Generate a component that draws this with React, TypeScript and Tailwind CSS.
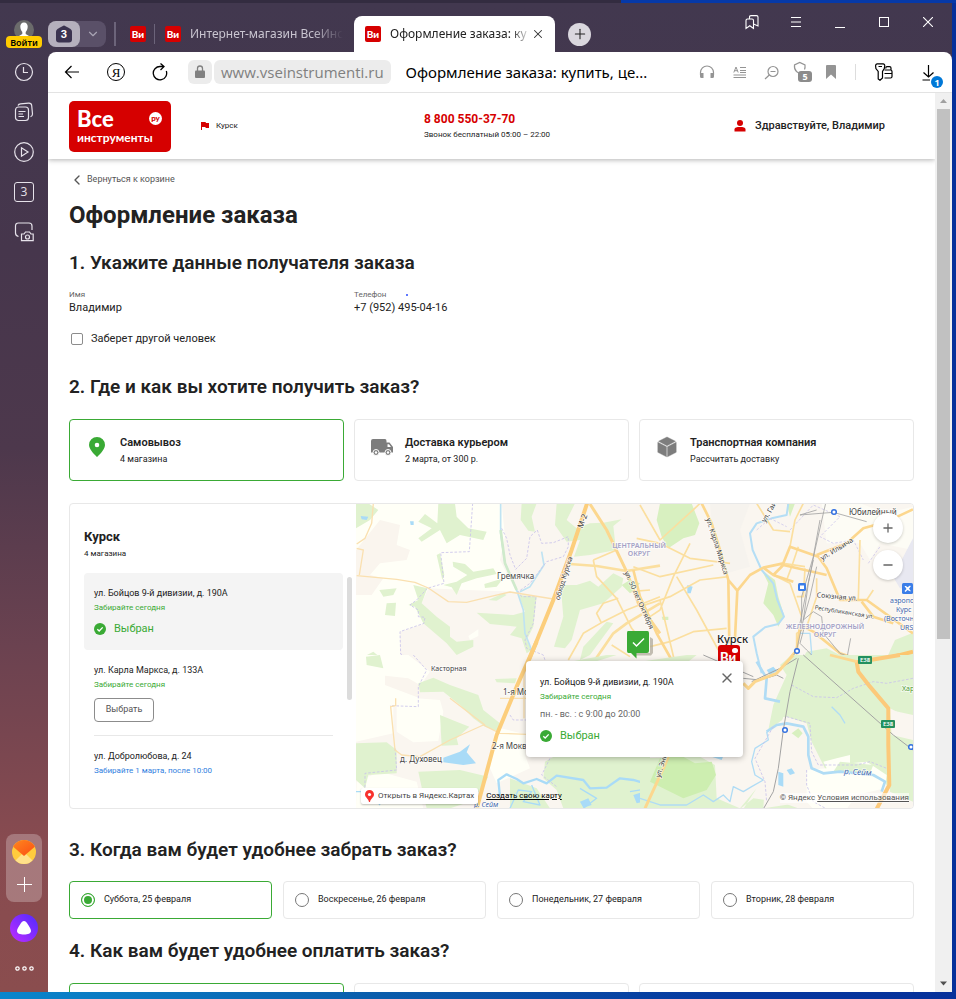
import { useState } from "react";
import type { ReactNode } from "react";
import { ChevronDown, ChevronLeft, Minus, Plus, X } from "lucide-react";

const UI = "font-['Noto_Sans','Open_Sans',sans-serif]";
const TAB = "font-['Open_Sans','Noto_Sans',sans-serif]";

function Favicon() {
  return (
    <span className="flex size-4 shrink-0 items-center justify-center rounded-[2px] bg-[#d60000] font-['Lato',sans-serif] text-[10px] leading-none font-black text-white">
      Ви
    </span>
  );
}

function TabBar() {
  return (
    <div className="flex h-[49px] justify-between">
      <div className="mt-[13px] flex h-9 min-w-0 items-center">
        <div className="flex h-[26px] w-[58px] shrink-0 items-center rounded-lg bg-[#5a5068]">
          <button className="flex h-[26px] w-8 items-center justify-center rounded-lg bg-[#b5b0bd]" aria-label="Вкладки">
            <span className="relative flex h-[18px] w-4 items-center justify-center text-[11px] leading-none font-bold text-white">
              <svg className="absolute inset-0" width="16" height="18" viewBox="0 0 16 18"><path d="M8 .5Q8.800 .5 14.500 4Q16 5 16 6.500V14.500Q16 17.500 13 17.500H3Q0 17.500 0 14.500V6.500Q0 5 1.500 4Q7.200 .5 8 .5Z" fill="#3b3350" /></svg>
              <span className="relative">3</span>
            </span>
          </button>
          <button className="flex h-[26px] w-[26px] items-center justify-center text-[#a9a4b4]" aria-label="Список вкладок">
            <ChevronDown size={14} strokeWidth={2} />
          </button>
        </div>
        <span className="ml-2 h-6 w-[2px] shrink-0 bg-[#6c647a]" />
        <button className="ml-[14px] shrink-0" aria-label="Закреплённая вкладка"><Favicon /></button>
        <span className="ml-2 h-5 w-px shrink-0 bg-[#6c647a]" />
        <button className="ml-[10px] flex w-[181px] shrink-0 items-center overflow-hidden text-left text-[#c9c5d0]">
          <Favicon />
          <span className={`ml-[9px] overflow-hidden text-[12px] leading-5 whitespace-nowrap [mask-image:linear-gradient(90deg,#000_80%,transparent)] ${UI}`}>Интернет-магазин ВсеИнс</span>
        </button>
        <div className="ml-2 flex h-9 w-[201px] shrink-0 items-center rounded-t-lg bg-white px-[11px]">
          <Favicon />
          <span className={`ml-[9px] min-w-0 flex-1 overflow-hidden text-[12px] leading-5 whitespace-nowrap text-[#222] [mask-image:linear-gradient(90deg,#000_86%,transparent)] ${UI}`}>Оформление заказа: ку</span>
          <button className="-mr-px text-[#333]" aria-label="Закрыть вкладку"><X size={14} strokeWidth={1.8} /></button>
        </div>
        <button className="ml-[13px] flex size-[23px] shrink-0 items-center justify-center rounded-full bg-[#dad7de] text-[#222]" aria-label="Новая вкладка">
          <Plus size={16} strokeWidth={1.6} />
        </button>
      </div>
      <div className="flex h-[38px] shrink-0 items-center pr-[2px] text-white">
        <button className="flex w-11 justify-center" aria-label="Закладки">
          <svg width="14" height="15" viewBox="0 0 14 15" fill="none" stroke="currentColor" strokeWidth="1.1">
            <path d="M1 5.500C1 4.500 1.500 4 2.500 4H7C8 4 8.500 4.500 8.500 5.500V13.500L4.800 10.800L1 13.500Z" />
            <path d="M4.500 4V2C4.500 1 5 .6 6 .6H11.500C12.500 .6 13 1 13 2V11L8.500 9" />
          </svg>
        </button>
        <button className="flex w-11 justify-center" aria-label="Меню">
          <svg width="10" height="10" viewBox="0 0 10 10" stroke="currentColor"><path d="M0 .5H10M0 5H10M0 9.500H10" /></svg>
        </button>
        <button className="flex h-3 w-11 items-end justify-center" aria-label="Свернуть"><span className="h-px w-[10px] bg-white" /></button>
        <button className="flex w-11 justify-center" aria-label="Развернуть"><span className="size-[10px] border border-white" /></button>
        <button className="flex w-11 justify-center" aria-label="Закрыть">
          <svg width="10" height="10" viewBox="0 0 10 10" stroke="currentColor" strokeWidth="1.100"><path d="M0 0L10 10M10 0L0 10" /></svg>
        </button>
      </div>
    </div>
  );
}

function SideButton({ label, children }: { label: string; children: ReactNode }) {
  return (
    <button aria-label={label} className="flex h-10 w-12 items-center justify-center text-[#e6e2ea]">
      {children}
    </button>
  );
}

const line = { fill: "none", stroke: "currentColor", strokeWidth: 1.2 } as const;

function Sidebar() {
  return (
    <aside className="flex w-12 shrink-0 flex-col items-center pt-[17px] pb-[14px]">
      <button className="relative flex h-7 w-9 justify-center">
        <svg width="20" height="20" viewBox="0 0 20 20">
          <circle cx="10" cy="10" r="10" fill="#6b6b6b" />
          <path d="M10 2.500C7.500 2.500 6.300 4.300 6.300 6.600C6.300 9 7.300 11 8.300 12V14L5 16V20H15V16L11.700 14V12C12.700 11 13.700 9 13.700 6.600C13.700 4.300 12.500 2.500 10 2.500Z" fill="#fff" />
        </svg>
        <span className={`absolute bottom-0 left-0 flex h-3 w-9 items-center justify-center rounded-[4px] bg-[#fc0] text-[9px] leading-none font-semibold text-black ${UI}`}>Войти</span>
      </button>
      <nav className="mt-1 flex flex-col">
        <SideButton label="История">
          <svg width="20" height="20" viewBox="0 0 20 20" {...line}><circle cx="10" cy="10" r="8.500" /><path d="M9.500 5V10.500H14" /></svg>
        </SideButton>
        <SideButton label="Коллекции">
          <svg width="20" height="20" viewBox="0 0 20 20" {...line}>
            <rect x="1.500" y="5" width="13" height="13.500" rx="3" />
            <path d="M4 3.500C4.500 2.300 5.500 2 6.500 1.900L14.500 1.200C16.500 1 17.500 2 17.700 3.500L18.500 12C18.500 13.500 18 14.300 16.500 14.800M4.500 9.500H11.500M4.500 12H9M4.500 14.500H10" />
          </svg>
        </SideButton>
        <SideButton label="Видео">
          <svg width="20" height="20" viewBox="0 0 20 20" {...line}><circle cx="10" cy="10" r="9.300" /><path d="M7.500 5.800V14.200L14 10Z" /></svg>
        </SideButton>
        <SideButton label="Вкладки">
          <span className={`flex size-5 items-center justify-center rounded-[3px] border border-[#e6e2ea] text-[12px] leading-none ${TAB}`}>3</span>
        </SideButton>
        <SideButton label="Скриншот">
          <svg width="20" height="20" viewBox="0 0 20 20" {...line}>
            <path d="M4.500 14.500C2.500 14 1.500 13 1.500 11V4C1.500 2 2.500 1 4.500 1H15C17 1 18 2 18 4V8" />
            <path d="M7.500 12H10L11.500 10H15.500L17 12H19.200V18.700H7.500Z" /><circle cx="13.500" cy="15" r="2" />
          </svg>
        </SideButton>
      </nav>
      <div className="mt-auto flex h-[68px] w-9 flex-col items-center rounded-lg bg-white/25 pt-[6px]">
        <button aria-label="Почта">
          <svg width="24" height="24" viewBox="0 0 24 24">
            <defs>
              <clipPath id="mail"><circle cx="12" cy="12" r="12" /></clipPath>
              <linearGradient id="flap" x1="0" y1="0" x2="1" y2="1"><stop offset="0" stopColor="#ff8a1f" /><stop offset="1" stopColor="#fa4b14" /></linearGradient>
            </defs>
            <g clipPath="url(#mail)"><rect width="24" height="24" fill="#ffcb3d" /><path d="M0 24L12 12L24 24Z" fill="#ffe08a" /><path d="M-1 5L12 16L25 5V-1H-1Z" fill="url(#flap)" /></g>
          </svg>
        </button>
        <button className="mt-2 flex size-6 items-center justify-center text-white" aria-label="Добавить">
          <svg width="15" height="15" viewBox="0 0 15 15" stroke="currentColor"><path d="M7.500 0V15M0 7.500H15" /></svg>
        </button>
      </div>
      <button className="mt-3" aria-label="Алиса">
        <svg width="28" height="28" viewBox="0 0 28 28">
          <defs><linearGradient id="alice" x1="0" y1="1" x2="1" y2="0"><stop offset="0" stopColor="#c02cff" /><stop offset="1" stopColor="#4e2bff" /></linearGradient></defs>
          <circle cx="14" cy="14" r="14" fill="url(#alice)" />
          <path d="M14 7C15.500 7 16.300 8 17.300 9.500C19 12 21 15 21 17C21 19.500 18 20.500 14 20.500S7 19.500 7 17C7 15 9 12 10.700 9.500C11.700 8 12.500 7 14 7Z" fill="#fff" />
        </svg>
      </button>
      <button className="mt-4 flex h-5 items-center" aria-label="Ещё">
        <svg width="19" height="5" viewBox="0 0 19 5" fill="none" stroke="#fff" strokeWidth="1.200"><circle cx="2.500" cy="2.500" r="1.700" /><circle cx="9.500" cy="2.500" r="1.700" /><circle cx="16.500" cy="2.500" r="1.700" /></svg>
      </button>
    </aside>
  );
}

function Toolbar() {
  return (
    <div className={`flex h-[41px] items-center border-b border-[#e3e3e3] pl-2 pr-[7px] text-black ${UI}`}>
      <button className="flex w-8 justify-center" aria-label="Назад">
        <svg width="16" height="14" viewBox="0 0 16 14" {...line}><path d="M15 7H1.500M7.500 1L1.500 7L7.500 13" /></svg>
      </button>
      <button className="ml-3 flex w-8 justify-center" aria-label="Яндекс">
        <span className="flex size-[18px] items-center justify-center rounded-full border border-black font-['Liberation_Serif',serif] text-[13px] leading-none">Я</span>
      </button>
      <button className="ml-3 flex w-8 justify-center" aria-label="Обновить">
        <svg width="16" height="18" viewBox="0 0 16 18" fill="none" stroke="currentColor" strokeWidth="1.300"><path d="M14.300 8A6.700 6.700 0 1 1 8 3.500H12M8.500 .5L12 3.600L8.500 7" /></svg>
      </button>
      <button className="ml-3 flex size-6 items-center justify-center rounded-md bg-[#ececec]" aria-label="Сертификат">
        <svg width="12" height="14" viewBox="0 0 12 14"><rect x="1" y="5.500" width="10" height="7.500" rx="1" fill="#808080" /><path d="M3.500 6V3.500A2.500 2.500 0 0 1 8.500 3.500V6" fill="none" stroke="#808080" strokeWidth="1.300" /></svg>
      </button>
      <span className={`ml-[2px] flex h-6 items-center rounded-md bg-[#ececec] px-[7px] text-[15px] leading-none text-[#808080] ${TAB}`}>www.vseinstrumenti.ru</span>
      <span className="ml-[15px] min-w-0 flex-1 truncate text-[15px] leading-6">Оформление заказа: купить, це...</span>
      <div className="flex items-center text-[#949494]">
        <button className="flex w-8 justify-center" aria-label="Аудио">
          <svg width="16" height="14" viewBox="0 0 16 14"><path d="M1.500 10V7.500A6.300 6.300 0 0 1 14.500 7.500V10" fill="none" stroke="currentColor" strokeWidth="1.200" /><path d="M1 8H4.500V13H2.500Q1 13 1 11.500ZM15 8H11.500V13H13.500Q15 13 15 11.500Z" fill="currentColor" /></svg>
        </button>
        <button className="flex w-8 justify-center" aria-label="Режим чтения">
          <svg width="13" height="13" viewBox="0 0 13 13" fill="none" stroke="currentColor"><path d="M.8 6.500L3 1L5.200 6.500M1.500 4.700H4.500M7 1.500H13M7 4.500H13M7 6.500H13M.5 9H13M.5 11.500H13" /></svg>
        </button>
        <button className="flex w-8 justify-center" aria-label="Масштаб">
          <svg width="15" height="15" viewBox="0 0 15 15" {...line}><circle cx="9" cy="6.500" r="5" /><path d="M5.300 10L1 14M6.500 6.500H11.500" /></svg>
        </button>
        <button className="relative flex w-8 justify-center" aria-label="Защита">
          <svg width="22" height="22" viewBox="0 0 22 22" {...line}><path d="M7.500 14.500V12.500L4.500 10.500Q2 8 2.500 4L7.700 1.500L13 4Q13.300 7 12.500 8.500" /></svg>
          <span className="absolute right-[7px] bottom-px flex h-[11px] w-[14px] items-center justify-center rounded-[3px] bg-[#8c8c8c] text-[9px] leading-none font-bold text-white">5</span>
        </button>
        <button className="flex w-6 justify-center" aria-label="В закладки">
          <svg width="10" height="14" viewBox="0 0 10 14"><path d="M0 1Q0 0 1 0H9Q10 0 10 1V14L5 9.500L0 14Z" fill="currentColor" /></svg>
        </button>
        <span className="ml-3 h-4 w-px bg-[#ddd]" />
        <button className="ml-3 flex w-8 justify-center text-black" aria-label="Пароли">
          <svg width="18" height="18" viewBox="0 0 18 18" {...line}>
            <path d="M2 .8H8Q10 1 9.700 3.200L9.300 5.500L7.500 8.500V15L5 17.300L3.200 16V8.500L.9 5.500L.6 3Q.5 1 2 .8ZM3.500 3.500H7" />
            <path d="M10.800 5.500V5Q10.800 3.700 12 3.700H14.500Q16 3.700 16 5V7M9.500 7H15.500Q17 7 17 8.500V13.500Q17 15 15.500 15H9.500M9.500 10.500H17" />
          </svg>
        </button>
        <button className="relative ml-[13px] flex h-8 w-8 items-center justify-center text-black" aria-label="Загрузки">
          <svg width="16" height="17" viewBox="0 0 16 17" {...line}><path d="M7.500 1V13M2.500 8.500L7.500 13L12.500 8.500M1.500 16H9" /></svg>
          <span className="absolute right-[2px] bottom-0 flex size-3 items-center justify-center rounded-full bg-[#0078d7] text-[9px] leading-none font-bold text-white">1</span>
        </button>
      </div>
    </div>
  );
}

function Header() {
  return (
    <header className="relative flex h-[66px] shrink-0 items-center bg-white pr-[50px] pl-[21px] shadow-[0_1px_5px_rgba(0,0,0,0.3)]">
      <a href="#home" className="block h-[51px] w-[102px] shrink-0 rounded-[5px] bg-[#d60000] pt-[5px] pr-[9px] pl-2 font-['Lato',sans-serif] font-black text-white">
        <span className="flex items-center justify-between">
          <span className="text-[22px] leading-[25px]">Все</span>
          <span className="flex size-[13px] items-center justify-center rounded-full bg-white text-[8px] leading-none text-[#d60000]">ру</span>
        </span>
        <span className="block text-[12px] leading-[13px] font-bold">инструменты</span>
      </a>
      <button className="ml-[30px] flex w-[223px] items-center gap-[7px] text-[8px]">
        <svg width="8" height="8" viewBox="0 0 8 8"><path d="M0 0H4.500L5 1H8V6H4.800L4.300 5H1V8H0Z" fill="#d60000" /></svg>
        Курск
      </button>
      <div>
        <a href="tel:88005503770" className="block text-[12px] leading-4 font-bold text-[#d60000]">8 800 550-37-70</a>
        <p className="text-[8px] leading-[15px]">Звонок бесплатный 05:00 – 22:00</p>
      </div>
      <button className="ml-auto flex items-center gap-[9px] text-[11px] font-medium">
        <svg width="12" height="12" viewBox="0 0 12 12" fill="#d60000"><circle cx="6" cy="3" r="3" /><path d="M.5 11.500V9.500C.5 7.500 3 7 6 7S11.500 7.500 11.500 9.500V11.500Z" /></svg>
        Здравствуйте, Владимир
      </button>
    </header>
  );
}

function H2({ children }: { children: ReactNode }) {
  return <h2 className="text-[19px] leading-[30px] font-semibold">{children}</h2>;
}

function PinIcon() {
  return <svg width="22" height="22" viewBox="0 0 22 22"><path d="M11 1A8 8 0 0 0 3 9C3 14 11 21 11 21S19 14 19 9A8 8 0 0 0 11 1ZM11 6.700A2.300 2.300 0 1 1 11 11.300A2.300 2.300 0 0 1 11 6.700Z" fill="#3aaa35" fillRule="evenodd" /></svg>;
}
function TruckIcon() {
  return (
    <svg width="22" height="17" viewBox="0 0 22 17" fill="#7d7d7d">
      <path d="M2 0H14Q15.500 0 15.500 2V3.500H18.500L22 8V13.500H0V2Q0 0 2 0ZM16.500 5.200V8H20L18 5.200Z" fillRule="evenodd" />
      <g stroke="#fff"><circle cx="5" cy="13.500" r="3" /><circle cx="17" cy="13.500" r="3" /></g><g fill="#fff"><circle cx="5" cy="13.500" r="1.200" /><circle cx="17" cy="13.500" r="1.200" /></g>
    </svg>
  );
}
function BoxIcon() {
  return <svg width="20" height="22" viewBox="0 0 20 22" fill="#7d7d7d"><path d="M10 1L18.500 5.300L10 9.700L1.500 5.300ZM.8 6.300L9.500 10.700V20.800L.8 16.300ZM19.200 6.300L10.500 10.700V20.800L19.200 16.300Z" stroke="#7d7d7d" strokeWidth=".4" /></svg>;
}

const deliveries = [
  { title: "Самовывоз", note: "4 магазина", icon: <PinIcon /> },
  { title: "Доставка курьером", note: "2 марта, от 300 р.", icon: <TruckIcon /> },
  { title: "Транспортная компания", note: "Рассчитать доставку", icon: <BoxIcon /> },
];

function CheckedIcon() {
  return <svg width="12" height="12" viewBox="0 0 12 12"><circle cx="6" cy="6" r="6" fill="#3aaa35" /><path d="M3.300 6.200L5.200 8L8.700 4.400" fill="none" stroke="#fff" strokeWidth="1.300" /></svg>;
}

function Chosen() {
  return <p className="flex items-center gap-2 text-[11px] leading-4 text-[#3aaa35]"><CheckedIcon />Выбран</p>;
}

function ShopList() {
  return (
    <div className="flex w-[286px] shrink-0 flex-col pt-[25px] pl-[14px]">
      <h3 className="text-[13px] leading-4 font-bold">Курск</h3>
      <p className="mt-[3px] text-[8px] leading-3">4 магазина</p>
      <div className="mt-[13px] flex gap-1">
        <ul className="w-[259px]">
          <li className="h-[77px] rounded bg-[#f4f4f4] px-[10px] pt-[13px]">
            <p className="text-[9px] leading-[15px]">ул. Бойцов 9-й дивизии, д. 190А</p>
            <p className="text-[8px] leading-[14px] text-[#3aaa35]">Забирайте сегодня</p>
            <div className="mt-[6px]"><Chosen /></div>
          </li>
          <li className="mx-[10px] border-b border-[#e8e8e8] pt-[13px] pb-[13px]">
            <p className="text-[9px] leading-[15px]">ул. Карла Маркса, д. 133А</p>
            <p className="text-[8px] leading-[14px] text-[#3aaa35]">Забирайте сегодня</p>
            <button className="mt-[6px] block h-6 w-[60px] rounded border border-[#8c8c8c] text-[9px] text-[#555]">Выбрать</button>
          </li>
          <li className="px-[10px] pt-[13px]">
            <p className="text-[9px] leading-[15px]">ул. Добролюбова, д. 24</p>
            <p className="text-[8px] leading-[14px] text-[#2f80e0]">Забирайте 1 марта, после 10:00</p>
          </li>
        </ul>
        <span className="mt-1 h-[123px] w-[5px] rounded-full bg-[#dcdcdc]" />
      </div>
    </div>
  );
}

function MapDrawing() {
  const road = "#fbdf9f";
  return (
    <svg className="absolute inset-0 size-full" viewBox="0 0 557 306" preserveAspectRatio="xMidYMid slice" fontFamily="'Noto Sans','Open Sans',sans-serif">
      <rect width="557" height="306" fill="#faf6f0" />
      {/* Countryside in the north-west */}
      <g transform="translate(-6 -3) scale(0.3333)" strokeLinejoin="round">
        <path d="M18 9H455L465 110L450 180L480 240L500 275L350 300L235 265L215 310L225 370L150 395L150 480H18Z" fill="#fffff7" />
        <path d="M90 60L150 75L140 135L180 150L170 180L90 190L60 225L100 235L65 285L18 285V150Z" fill="#faf5ee" />
        <path d="M235 265L350 270L500 275L350 307H295Z" fill="#faf6f0" />
        <path d="M355 408L385 388V408L360 420Z" fill="#fffff7" />
        <g fill="#e0f2cf">
          <path d="M18 10H55L85 30L60 60L18 85ZM265 10H315L320 50L355 85L410 95L400 120L330 105L290 130L270 90L215 125L205 115L245 85L205 65L225 42L262 70Z" />
          <path d="M308 185L345 192L370 215L430 205L440 222L380 235L335 250L320 285L305 262L280 255L320 245L352 225L310 200ZM260 165L270 160L283 225L277 240ZM515 10H560L545 50L555 95L535 92L512 60Z" />
          <path d="M620 10H675L650 60L680 85L720 70L760 68L815 58L790 78L798 150L720 165L672 170L690 120L650 125L615 75ZM632 255L680 255L720 242L745 260L790 220L820 235L815 260L760 310L690 330L665 420L645 445L612 440L640 350Z" />
          <path d="M770 365L790 370L760 410L720 465L690 480L700 440ZM190 255L232 265L215 310L260 350L300 380L300 410L320 425L370 420V440L320 465L290 430L220 370L195 320L175 315L205 300ZM505 285L560 290L550 380L530 420L545 450L530 460L515 415L480 405L500 380L420 372L380 338L490 345L525 335Z" />
          <path d="M110 310L138 308L135 348L105 345ZM88 270L140 265L130 285L100 290ZM403 252L460 235L440 260L405 264ZM415 300L460 280L470 285L440 302ZM45 468L70 455L100 480H50Z" />
        </g>
        <g fill="#a9dbf7"><path d="M32 48L55 50L50 60L35 58ZM180 64H191V75H182Z" /></g>
        <g fill="none" stroke="#bfe3f2" strokeWidth="5"><path d="M452 10L452 100L465 190L500 270L520 330L525 400L545 450M575 155L582 195L540 260L510 275" /></g>
        <path d="M452 90L465 190L500 270" fill="none" stroke="#cfeacb" strokeWidth="8" />
        <g fill="none" stroke="#c9c3ea" strokeWidth="2.500" strokeDasharray="8 5">
          <path d="M368 10L358 155L272 158L282 250L232 265L200 300L180 315L205 330L205 350L225 352L222 370L150 395L152 462L190 480" />
          <path d="M455 85L470 115L480 165L497 208L530 175L540 110L562 90L575 130L610 128L655 110L655 140L640 170L590 185L540 250L505 275L515 290L558 290L550 370L525 420L530 445L580 465L585 480" />
        </g>
        <g fill="none" stroke="#fae0b0" strokeWidth="4">
          <path d="M20 227L140 238L195 247L235 264L295 305L350 307L420 290L480 276L610 297M70 10L65 70L45 115L20 132M20 145L40 150L28 225" />
        </g>
        <g fill="none" stroke={road} strokeWidth="5">
          <path d="M655 480L700 400L760 365L830 330L930 290M730 180L800 150M730 180L740 230L800 295L845 385L890 440M805 295L760 310L740 340L755 370M840 275L900 270M785 435L840 470" />
          <path d="M660 192L740 198L830 213L930 197M735 480L790 400L830 370L930 310" strokeWidth="8" />
        </g>
        <path d="M713 5L665 150L610 300L537 480" fill="none" stroke="#fcce7c" strokeWidth="12" />
        <path d="M720 12L770 90L830 215L865 310L930 400" fill="none" stroke="#fcd78e" strokeWidth="9" />
      </g>
      {/* South-west with the lake and river bends */}
      <g transform="translate(-6 152) scale(0.3333)" strokeLinejoin="round">
        <path d="M18 0H175L240 50L205 100V150L130 155V235L18 260ZM140 125L270 135L280 170L265 258L190 262L140 230ZM435 215L525 238V300L540 340L440 385L420 340ZM20 380L90 350L200 380L220 460H18Z" fill="#fffff7" />
        <path d="M105 62L175 70L210 90V130L105 90Z" fill="#faf5ee" />
        <g fill="#e0f2cf">
          <path d="M18 265L110 262L140 285V355L55 360L45 400L18 375ZM48 5L90 0L100 40L50 30ZM205 85L250 68L300 90L385 120L400 165L450 205V232L405 215L370 190L330 150L280 110L210 112ZM270 180L320 200L358 215L320 250L325 270L275 272Z" />
          <path d="M205 350L330 345L415 365L395 400L360 440L300 460H230L220 420ZM435 72L500 70L495 85L440 82ZM585 320L620 300L900 300V460H640L620 405L580 370ZM660 20L770 0H800L720 25L660 40ZM480 370L560 400L600 460H480Z" />
        </g>
        <g fill="#a9dbf7"><path d="M280 308L330 290L360 268L350 292L378 325L340 330L280 322ZM690 440L715 430L725 450L700 458ZM850 420L880 410V440L860 445Z" /></g>
        <g fill="none" stroke="#a9dbf7" strokeWidth="7">
          <path d="M450 425L445 375L470 358L500 372L520 385L560 372L590 385L620 362L700 375L720 400L770 398L810 370L850 375L900 390" />
          <path d="M480 460L505 405L545 410L520 440L570 450L545 390M690 400L740 430L700 460M840 410L900 400M18 410H60L90 450" strokeWidth="4" />
        </g>
        <g fill="none" stroke="#c9c3ea" strokeWidth="2.500" strokeDasharray="8 5"><path d="M190 0L230 45L205 95V155L120 152M135 280L140 345L45 355V400M480 180L490 195H530M600 310L575 360L620 395" /></g>
        <g fill="none" stroke="#fae0b0" strokeWidth="4"><path d="M137 130V152L122 155L135 285L155 300L210 305L300 255L400 210L450 235L530 238M300 130L405 210M450 130H530M522 50V190" /></g>
        <path d="M560 -40L500 95L440 240L380 462" fill="none" stroke="#fcce7c" strokeWidth="12" />
        <path d="M900 405L885 460" stroke="#fcce7c" strokeWidth="8" />
      </g>
      {/* City centre, river and railway */}
      <g transform="translate(284 -3) scale(0.3333)" strokeLinejoin="round">
        <path d="M210 10H330L300 90L330 200L260 220L220 130Z" fill="#f6f3ee" />
        <path d="M545 10L660 10L740 40L819 20V150L720 130L690 180L660 130H560Z" fill="#fdfcf5" />
        <path d="M819 115L785 180L750 215L780 265L819 270Z" fill="#e8e8f1" />
        <g fill="#d8f0c0">
          <path d="M60 10H155L178 70L165 105L130 115L85 145L65 110L50 60ZM365 210L405 240L415 290L432 345L415 380L400 345L370 310L385 250Z" />
          <path d="M-55 255L-30 240L0 250L-30 280ZM65 350H85V360H68ZM440 10H465L450 50Z" />
        </g>
        <path d="M460 520L500 455L560 445L610 470L640 500L740 475L765 420L819 398V520Z" fill="#e0f2cf" />
        <g fill="#a9dbf7"><path d="M142 255L158 260L152 280H142ZM470 485L485 470V490Z" /></g>
        <path d="M445 10L440 45L395 55L350 70L330 100L338 150L365 210L400 250L412 300L432 350L415 372L375 382L340 410L350 460L365 520" fill="none" stroke="#b5def5" strokeWidth="6" />
        <path d="M490 510L515 460L510 400L480 400" fill="none" stroke="#b5def5" strokeWidth="4" />
        <g fill="none" stroke="#cfc9ec" strokeWidth="2.500" strokeDasharray="8 5"><path d="M350 90L390 55L440 80M450 90L520 15L600 50L570 80L540 110L580 130L640 120L670 180M685 190L720 140" /></g>
        <g fill="none" stroke={road} strokeWidth="5">
          <path d="M-10 115L60 130L150 175L270 190M-20 200L60 230L220 195M0 320L90 290L180 240L265 230M30 440L90 425L160 395L260 385M60 300L110 510M110 230L170 330L235 450M150 130L100 230L60 330L30 350M0 15L60 120L170 20L180 10" />
          <path d="M430 190L495 200M475 140L455 200L440 240M350 10L400 90L450 95M450 140L465 60L490 10M495 205L490 290L470 290M400 225L450 250L485 350M660 120L655 300M700 270L680 300" />
          <path d="M530 235V290L500 380L470 400V480" />
        </g>
        <g fill="none" stroke="#fcd78e" strokeWidth="8">
          <path d="M185 10L215 70L240 150L265 240L292 272L330 225L370 203L430 190L450 140L535 170L560 205L600 300H680L819 400M265 240L268 430M292 272L285 415M370 203L400 225L430 195L560 225M530 165L620 130L670 85L740 65L819 28M665 305L700 350L760 370M400 225L460 245" />
          <path d="M-20 210L0 290L50 400L95 480M480 375L520 395L600 460L660 480M480 380L470 450L420 510" />
        </g>
        <path d="M660 482L740 475L819 455" fill="none" stroke="#fcc66f" strokeWidth="12" />
        <g fill="none" stroke="#a3a3a3" strokeWidth="2.500">
          <path d="M557 10L525 150L505 250L490 360L470 450L435 510M540 60L520 170L485 290V375M530 200L510 290L490 360L520 335L545 350L550 400L600 460L622 468L632 415M520 180L500 270L480 370M580 37L480 45L530 30M580 37L680 65M495 375L480 430L500 450L560 510" />
        </g>
      </g>
      {/* South-east forest and the Seym */}
      <g transform="translate(284 152) scale(0.3333)" strokeLinejoin="round">
        <path d="M455 0H819V180L750 165V400L700 350H560L515 260L500 205L440 185L385 225L400 150L440 60L420 30ZM180 305L0 310V462H300L340 430L420 440L480 462H310L350 400L300 460L230 430L225 330Z" fill="#e0f2cf" />
        <path d="M750 160L819 200V440L750 410ZM0 20L140 0H170L120 40Z" fill="#e0f2cf" />
        <path d="M750 160L819 195V255L755 240Z" fill="#faf6f0" />
        <path d="M60 310L120 300L165 325L215 320L228 360L200 405L130 430L30 380Z" fill="#cdeeb0" />
        <path d="M345 310L355 265L420 220L430 185L500 215L510 300L540 345L500 360V440L370 460L375 380Z" fill="#faf6f0" />
        <path d="M500 345L560 340L550 320L590 310L630 300V325L680 320L740 360L735 400L650 420L620 462H520L500 440Z" fill="#fffff7" />
        <path d="M600 320L700 330L690 355L580 350Z" fill="#e0f2cf" />
        <path d="M455 235L475 220L488 235L475 250Z" fill="#d8f0c0" />
        <g fill="#a9dbf7"><path d="M380 45L400 35L412 48L390 60ZM415 350L430 355V395L415 390ZM440 345L455 340L465 355L450 360ZM215 305L250 303L245 315Z" /></g>
        <g fill="none" stroke="#b0dcf5" strokeWidth="5">
          <path d="M350 20L380 70L375 130L420 140M380 230L410 210L440 205L490 215L505 245L505 300L515 340L550 355L600 350L700 360L735 380L725 410" strokeWidth="8" />
          <path d="M380 230L385 255L345 280L335 320L345 360L370 375L335 395L310 410L280 395L270 440L250 420L220 440L190 420L140 450H60L0 430M575 155L600 180L615 205" strokeWidth="4" />
        </g>
        <g fill="none" stroke="#c9c3ea" strokeWidth="2.500" strokeDasharray="8 5"><path d="M455 90L520 125L590 128L640 100L700 80L740 85L819 70M400 215L345 310L375 380L380 440M440 185L510 205L515 290L535 330H650L690 320L740 340M500 345V390L520 440L560 462" /></g>
        <path d="M190 0L340 65M475 10L450 110L430 225L415 340L400 410L370 462M490 0L760 240L819 285M310 70L360 75L410 60L430 70M335 80L420 40L470 10" fill="none" stroke="#a3a3a3" strokeWidth="3" />
        <path d="M310 85L325 100L345 80L410 55L460 0M100 270L70 340L15 460" fill="none" stroke="#fcd78e" strokeWidth="9" />
        <path d="M650 20L655 50L690 95L745 160V270L748 390L710 462M650 22L780 0" fill="none" stroke="#fcc97a" strokeWidth="12" />
        <path d="M570 0L650 20" stroke="#fcd78e" strokeWidth="8" />
      </g>
      <g fill="#fff" stroke="#3371e0" strokeWidth="1.500">
        <circle cx="478" cy="9" r="2.300" /><circle cx="441" cy="148" r="2.300" /><circle cx="429" cy="227" r="2.300" /><circle cx="555" cy="244" r="2.300" />
      </g>
      <g fill="#3a7de8"><rect x="442" y="80" width="8" height="8" rx="1.500" /><rect x="546" y="80" width="11" height="11" rx="1.500" /></g>
      <path d="M444 82.500H448V86H444Z" fill="#fff" />
      <path d="M548.500 83H550L551.500 84.300L554 82.500L554.800 83.300L553 85.800L554.500 87.500V88.500L551.500 87L549.500 89L548.500 88L550.500 86Z" fill="#fff" />
      <g fill="#23905f"><rect x="502" y="153" width="14" height="8" rx="1" /><rect x="525" y="217" width="14" height="8" rx="1" /></g>
      <g fontSize="6" fontWeight="600" fill="#fff" textAnchor="middle"><text x="509" y="159">E38</text><text x="532" y="223">E38</text></g>
      <g fill="#444" fontSize="7" stroke="#fff" strokeWidth="1.500" strokeOpacity="0.700" paintOrder="stroke">
        <text x="141" y="76" fontSize="8">Гремячка</text>
        <text x="75" y="168">Касторная</text>
        <text x="147" y="192" fontSize="8">1-я Мо</text>
        <text x="136" y="246" fontSize="8">2-я Мокв</text>
        <text x="44" y="259" fontSize="8">д. Духовец</text>
        <text x="493" y="12" fontSize="8">Юбилейный</text>
        <g textAnchor="middle">
          <text transform="translate(229 19) rotate(-70)" fontSize="8">М-2</text>
          <text transform="translate(210 76) rotate(-73)">обход Курска</text>
          <text transform="translate(281 98) rotate(66)">ул. 50 лет Октября</text>
          <text transform="translate(359 44) rotate(72)">ул. Карла Маркса</text>
          <text transform="translate(482 48) rotate(-31)">ул. Ильича</text>
          <text transform="translate(481 96) rotate(5)">Союзная ул.</text>
          <text transform="translate(488 111) rotate(9)" fontSize="6">Республиканская ул.</text>
          <text transform="translate(308 262) rotate(-72)">ул. Энге</text>
          <text transform="translate(415 10) rotate(-60)">ул. Гай</text>
        </g>
        <text x="361" y="140" fontSize="11" fontWeight="500" fill="#222">Курск</text>
        <text x="546" y="188" fill="#4d9a34">Хар</text>
        <g fill="#3f66ad">
          <text x="534" y="100">аэропо</text><text x="540" y="109">Курс</text><text x="528" y="118">(Восточн</text><text x="544" y="127">URS</text>
          <text transform="translate(488 271) rotate(3)" fontSize="8" fontStyle="italic">р. Сейм</text><text x="118" y="304" fontStyle="italic">р. Сейм</text>
        </g>
        <g fill="#a4a2c6" fontWeight="600" textAnchor="middle">
          <text x="283" y="45">ЦЕНТРАЛЬНЫЙ</text><text x="283" y="53">ОКРУГ</text>
          <text x="469" y="126">ЖЕЛЕЗНОДОРОЖНЫЙ</text><text x="469" y="134">ОКРУГ</text>
        </g>
      </g>
    </svg>
  );
}

function ShopMap() {
  const zoomButton = "flex size-[30px] items-center justify-center rounded-full bg-white text-[#666] shadow-[0_1px_3px_rgba(0,0,0,0.2)]";
  return (
    <div className="relative min-w-0 flex-1 overflow-hidden">
      <MapDrawing />
      <svg className="absolute top-[127px] left-[270px]" width="30" height="32" viewBox="0 0 30 32">
        <path d="M8 24.500H25L27 22V8L24 6V22H8Z" fill="#a9a596" opacity="0.700" />
        <path d="M2 0H21.500Q23 0 23 2V20Q23 22 21 22H10.500V27.500L5 22H2.500Q1 22 1 20V2Q1 0 2 0Z" fill="#3aaa35" />
        <path d="M7 11.500L10.500 15L18 7.500" fill="none" stroke="#fff" strokeWidth="1.500" />
      </svg>
      <span className="absolute top-[141px] left-[362px] h-[30px] w-[22px] rounded-[3px] bg-[#d60000] pt-[6px] pl-[2px] font-['Lato',sans-serif] text-[13px] leading-none font-black text-white">
        Ви
        <span className="absolute top-[3px] right-[2px] h-[5px] w-[6px] rounded-full bg-white" />
      </span>
      <div className="absolute top-[157px] left-[170px] h-24 w-[217px] rounded bg-white px-[14px] pt-[14px] shadow-[0_1px_6px_rgba(0,0,0,0.3)]">
        <p className="text-[9px] leading-[15px]">ул. Бойцов 9-й дивизии, д. 190А</p>
        <p className="text-[8px] leading-[14px] text-[#3aaa35]">Забирайте сегодня</p>
        <p className="mt-[3px] text-[9px] leading-[15px] text-[#666]">пн. - вс. : с 9:00 до 20:00</p>
        <div className="mt-[6px]"><Chosen /></div>
        <button className="absolute top-[9px] right-[8px] text-[#666]" aria-label="Закрыть"><X size={16} strokeWidth={2} /></button>
      </div>
      <div className="absolute top-[9px] right-[10px] flex flex-col gap-[7px]">
        <button className={zoomButton} aria-label="Приблизить"><Plus size={14} strokeWidth={2.200} /></button>
        <button className={zoomButton} aria-label="Отдалить"><Minus size={14} strokeWidth={2.200} /></button>
      </div>
      <div className="absolute bottom-[4px] left-[5px] flex items-center gap-2 text-[8px] leading-4">
        <a href="#maps" className="flex h-4 items-center gap-1 rounded-[2px] bg-white px-1 text-[#444] shadow-[0_1px_2px_rgba(0,0,0,0.25)]">
          <svg width="9" height="12" viewBox="0 0 9 12"><path d="M4.500 0A4.500 4.500 0 0 0 0 4.500C0 7.500 3.500 8.500 4 12H5C5.500 8.500 9 7.500 9 4.500A4.500 4.500 0 0 0 4.500 0Z" fill="#f8322e" /><circle cx="4.500" cy="4.500" r="1.600" fill="#fff" /></svg>
          Открыть в Яндекс.Картах
        </a>
        <a href="#create" className="text-black underline">Создать свою карту</a>
      </div>
      <p className="absolute right-1 bottom-[5px] bg-white/60 text-[8px] leading-[10px] text-[#555]">© Яндекс <a href="#terms" className="underline">Условия использования</a></p>
    </div>
  );
}

const days = ["Суббота, 25 февраля", "Воскресенье, 26 февраля", "Понедельник, 27 февраля", "Вторник, 28 февраля"];

function Checkout() {
  const [other, setOther] = useState(false);
  const [day, setDay] = useState(0);
  return (
    <main className="flex flex-col px-[21px] pt-3">
      <a href="#cart" className="flex h-[18px] items-center gap-[2px] self-start text-[9px] text-[#555]"><ChevronLeft size={16} strokeWidth={2} />Вернуться к корзине</a>
      <h1 className="mt-[10px] text-[24px] leading-8 font-bold">Оформление заказа</h1>
      <section className="mt-[17px]">
        <H2>1. Укажите данные получателя заказа</H2>
        <div className="mt-[11px] grid grid-cols-3 gap-[10px]">
          <div>
            <label htmlFor="name" className="block text-[8px] leading-3 text-[#666]">Имя</label>
            <input id="name" readOnly defaultValue="Владимир" className="block h-[14px] w-full text-[11px] leading-[14px] outline-none" />
          </div>
          <div>
            <label htmlFor="phone" className="flex items-center text-[8px] leading-3 text-[#666]">Телефон<span className="ml-5 size-[2px] rounded-full bg-[#2b4bff]" /></label>
            <input id="phone" type="tel" readOnly defaultValue="+7 (952) 495-04-16" className="block h-[14px] w-full text-[11px] leading-[14px] outline-none" />
          </div>
        </div>
        <label className="mt-4 flex h-4 items-center gap-2 pl-[2px] text-[11px]">
          <input type="checkbox" checked={other} onChange={(e) => setOther(e.target.checked)} className="size-3 appearance-none rounded-[2px] border border-[#8c8c8c] checked:bg-[#3aaa35]" />
          Заберет другой человек
        </label>
      </section>
      <section className="mt-[25px]">
        <H2>2. Где и как вы хотите получить заказ?</H2>
        <div className="mt-[17px] grid grid-cols-3 gap-[10px]">
          {deliveries.map((d, i) => (
            <button key={d.title} className={`flex h-[62px] items-center rounded border pl-4 text-left ${i === 0 ? "border-[#3aaa35]" : "border-[#e8e8e8]"}`}>
              <span className="flex w-[22px] justify-center pb-[6px]">{d.icon}</span>
              <span className="ml-3 text-[9px] leading-4">
                <span className="block text-[11px] leading-[17px] font-semibold">{d.title}</span>
                {d.note}
              </span>
            </button>
          ))}
        </div>
        <div className="mt-[22px] flex h-[306px] overflow-hidden rounded border border-[#e8e8e8]">
          <ShopList />
          <ShopMap />
        </div>
      </section>
      <section className="mt-[26px]">
        <H2>3. Когда вам будет удобнее забрать заказ?</H2>
        <div className="mt-4 grid grid-cols-4 gap-[11px]">
          {days.map((d, i) => (
            <label key={d} className={`flex h-[38px] items-center gap-[9px] rounded border pl-[11px] text-[9px] ${i === day ? "border-[#3aaa35]" : "border-[#e8e8e8]"}`}>
              <input
                type="radio"
                name="day"
                checked={i === day}
                onChange={() => setDay(i)}
                className="size-[14px] appearance-none rounded-full border border-[#777] checked:border-[#3aaa35] checked:bg-[#3aaa35] checked:shadow-[inset_0_0_0_2px_#fff]"
              />
              {d}
            </label>
          ))}
        </div>
      </section>
      <section className="mt-[17px]">
        <H2>4. Как вам будет удобнее оплатить заказ?</H2>
        <div className="mt-[17px] grid grid-cols-3 gap-[10px]">
          <div className="h-[62px] rounded border border-[#3aaa35]" />
          <div className="h-[62px] rounded border border-[#e8e8e8]" />
          <div className="h-[62px] rounded border border-[#e8e8e8]" />
        </div>
      </section>
    </main>
  );
}

function ScrollBar() {
  return (
    <div className="flex w-[17px] shrink-0 flex-col items-center bg-[#f0f0f0]">
      <svg width="17" height="16" viewBox="0 0 17 16"><path d="M5 10L8.500 6L12 10Z" fill="#a0a0a0" /></svg>
      <span className="h-[59%] w-[13px] bg-[#c1c1c1]" />
      <svg className="mt-auto" width="17" height="17" viewBox="0 0 17 17"><path d="M5 6.500H12L8.500 10.500Z" fill="#505050" /></svg>
    </div>
  );
}

export default function App() {
  return (
    <div className="flex h-screen flex-col overflow-hidden bg-[linear-gradient(90deg,#0a86cc,#0a5cab_40%,#0639a0_75%,#06309a)] pr-1 pb-[7px] font-['Roboto',sans-serif] text-[#222]">
      <div className="-mr-1 h-[3px] shrink-0 bg-[linear-gradient(90deg,#332c40_65%,#0639a8_65%)]" />
      <div className="flex min-h-0 flex-1 bg-[linear-gradient(180deg,#42384f,#46364c_25%,#4d384c_45%,#6b4250_65%,#884b50_85%,#8a4d4e)]">
        <Sidebar />
        <div className="flex min-w-0 flex-1 flex-col">
          <TabBar />
          <div className="flex min-h-0 flex-1 flex-col rounded-t-lg bg-white">
            <Toolbar />
            <div className="flex min-h-0 flex-1">
              <div className="min-w-0 flex-1 overflow-hidden">
                <Header />
                <Checkout />
              </div>
              <ScrollBar />
            </div>
          </div>
        </div>
      </div>
    </div>
  );
}
